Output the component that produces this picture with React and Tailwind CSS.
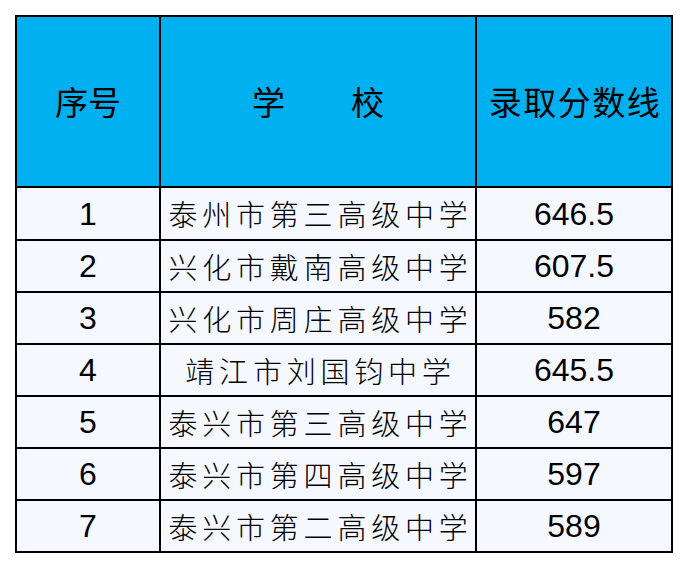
import { Fragment } from "react"

const rows = [
  ["1", "泰州市第三高级中学", "646.5"],
  ["2", "兴化市戴南高级中学", "607.5"],
  ["3", "兴化市周庄高级中学", "582"],
  ["4", "靖江市刘国钧中学", "645.5"],
  ["5", "泰兴市第三高级中学", "647"],
  ["6", "泰兴市第四高级中学", "597"],
  ["7", "泰兴市第二高级中学", "589"],
]

export default function App() {
  return (
    <div className="w-[688px] h-[568px] bg-white pt-[15px] pl-[15px]">
      <div className="grid w-[658px] grid-cols-[142px_314px_194px] grid-rows-[169px_51px_50px_50px_50px_50px_50px_50px] gap-[2px] bg-black p-[2px] text-black">
        <div className="flex items-center justify-center bg-[#00b0f0] text-[33px] font-['Noto_Sans_CJK_SC',sans-serif]">
          序号
        </div>
        <div className="flex items-center justify-center bg-[#00b0f0] text-[33px] whitespace-pre font-['Noto_Sans_CJK_SC',sans-serif]">
          学　　校
        </div>
        <div className="flex items-center justify-center bg-[#00b0f0] pl-[2px] text-[33px] tracking-[1.5px] font-['Noto_Sans_CJK_SC',sans-serif]">
          录取分数线
        </div>

        {rows.map(([n, school, score]) => (
          <Fragment key={n}>
            <div className="flex items-center justify-center bg-[#f5f9ff] text-[32px] leading-none font-['Liberation_Sans',Arial,sans-serif]">
              {n}
            </div>
            <div className="flex items-center justify-center bg-[#f5f9ff] pl-[5px] text-[29px] font-light leading-none tracking-[4.8px] font-['Noto_Sans_CJK_SC',sans-serif]">
              {school}
            </div>
            <div className="flex items-center justify-center bg-[#f5f9ff] text-[32px] leading-none font-['Liberation_Sans',Arial,sans-serif]">
              {score}
            </div>
          </Fragment>
        ))}
      </div>
    </div>
  )
}
